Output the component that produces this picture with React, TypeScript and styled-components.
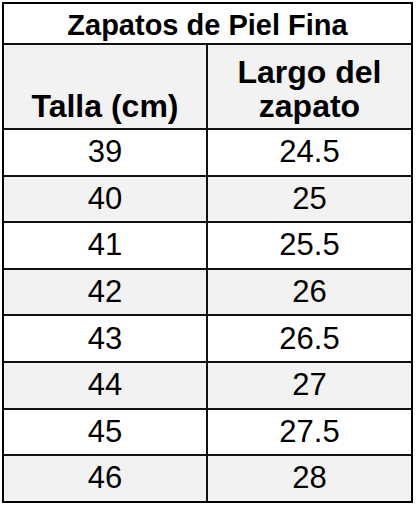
import * as React from "react";
import styled, { createGlobalStyle } from "styled-components";

const GlobalStyle = createGlobalStyle`
  html, body {
    margin: 0;
    padding: 0;
    background: #ffffff;
  }
  body {
    font-family: "Liberation Sans", Arial, sans-serif;
    color: #000;
  }
`;

const sizes = [
  { talla: "39", largo: "24.5" },
  { talla: "40", largo: "25" },
  { talla: "41", largo: "25.5" },
  { talla: "42", largo: "26" },
  { talla: "43", largo: "26.5" },
  { talla: "44", largo: "27" },
  { talla: "45", largo: "27.5" },
  { talla: "46", largo: "28" },
];

const Table = styled.div`
  box-sizing: border-box;
  margin: 2px 0 0 2px;
  width: 411px;
  border: 2px solid #000;
  background: #fff;
`;

const Title = styled.div`
  height: 39px;
  box-sizing: border-box;
  padding-top: 5px;
  text-align: center;
  font-size: 29px;
  font-weight: bold;
  line-height: 32px;
`;

const Row = styled.div<{ $shade?: boolean; $height: number }>`
  display: grid;
  grid-template-columns: 202px 1fr;
  box-sizing: border-box;
  height: ${(p) => p.$height}px;
  border-top: 2px solid #111;
  background: ${(p) => (p.$shade ? "#f2f2f2" : "#ffffff")};
`;

const HeadCell = styled.div<{ $divider?: boolean }>`
  display: flex;
  align-items: flex-end;
  justify-content: center;
  box-sizing: border-box;
  padding-bottom: 5px;
  text-align: center;
  font-size: 32px;
  font-weight: bold;
  line-height: 34px;
  border-left: ${(p) => (p.$divider ? "2px solid #111" : "none")};
`;

const Cell = styled.div<{ $divider?: boolean }>`
  display: flex;
  align-items: center;
  justify-content: center;
  font-size: 31px;
  border-left: ${(p) => (p.$divider ? "2px solid #111" : "none")};
`;

export default function App() {
  return (
    <>
      <GlobalStyle />
      <Table>
        <Title>Zapatos de Piel Fina</Title>
        <Row $shade $height={85}>
          <HeadCell>Talla (cm)</HeadCell>
          <HeadCell $divider>
            Largo del
            <br />
            zapato
          </HeadCell>
        </Row>
        {sizes.map((s, i) => (
          <Row key={s.talla} $shade={i % 2 === 1} $height={46.6}>
            <Cell>{s.talla}</Cell>
            <Cell $divider>{s.largo}</Cell>
          </Row>
        ))}
      </Table>
    </>
  );
}
